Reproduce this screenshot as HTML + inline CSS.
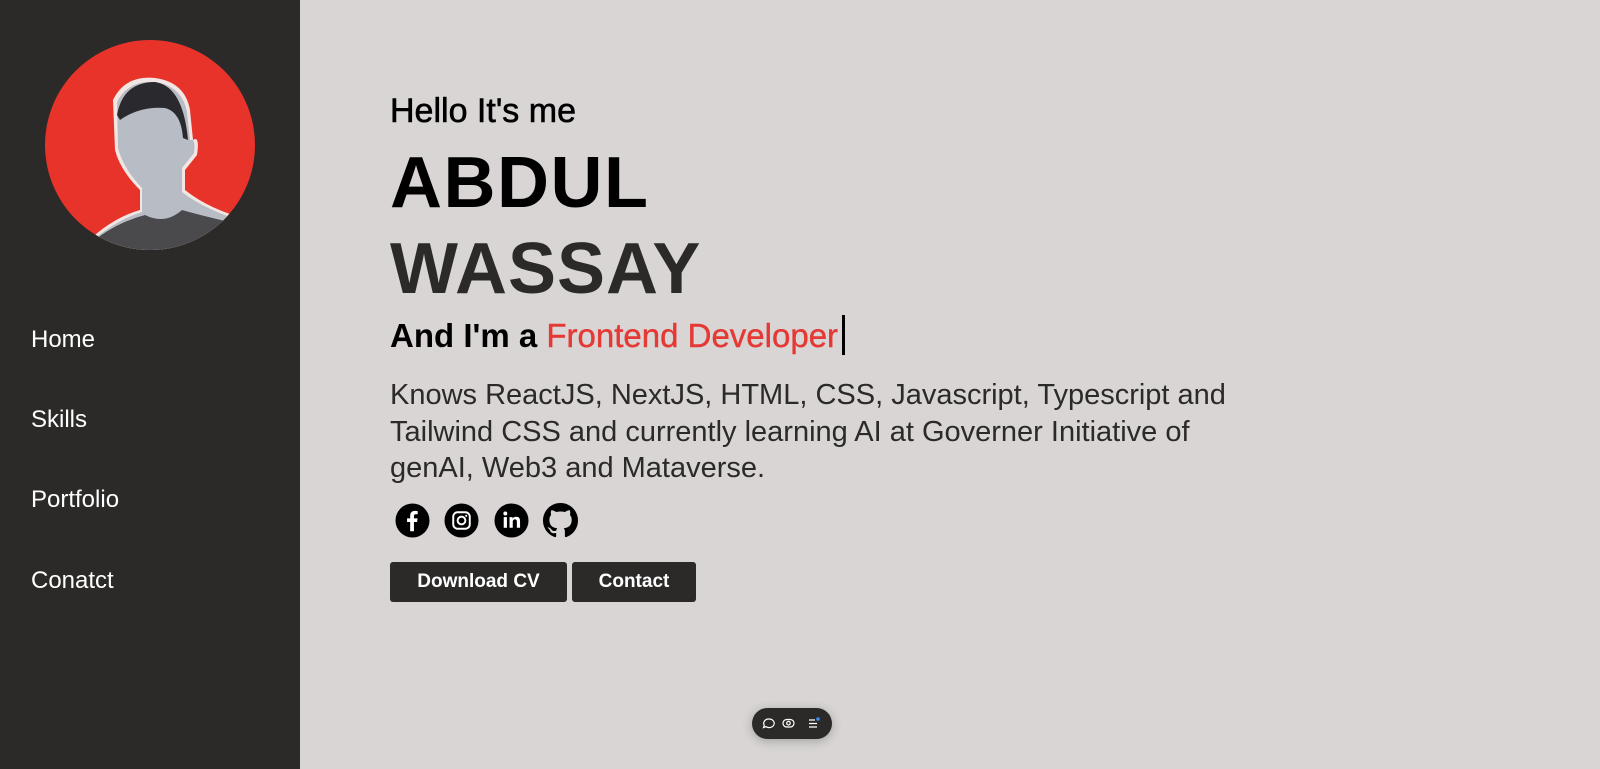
<!DOCTYPE html>
<html><head><meta charset="utf-8"><style>
*{margin:0;padding:0;box-sizing:border-box}
body{width:1600px;height:769px;overflow:hidden;background:#d8d5d4;font-family:"Liberation Sans",sans-serif;position:relative}
.side{position:absolute;left:0;top:0;width:300px;height:769px;background:#2b2a29}
.av{position:absolute;left:45px;top:40px;width:210px;height:210px;border-radius:50%;background:#e8332b;overflow:hidden}
.nav{position:absolute;left:31px;color:#fff;font-size:24px}
.t{position:absolute;left:390px;color:#000;white-space:nowrap}
.btn{position:absolute;top:562px;height:40px;background:#2b2a29;color:#fff;border-radius:3px;font-size:19px;font-weight:bold;display:flex;align-items:center;justify-content:center}
.ic{position:absolute;top:503px;width:35px;height:35px}
</style></head><body>
<div class="side">
<div class="av">
<svg width="210" height="210" viewBox="0 0 210 210">
<path d="M30 215 Q60 180 95 170 L95 150 Q75 130 70 110 L68 60 Q80 35 110 38 Q140 42 145 70 L148 100 Q155 95 152 115 L140 130 L140 150 Q165 170 205 180 L210 215Z" fill="#f2e6e4"/>
<path d="M33 215 Q62 183 97 172 L97 148 Q78 128 73 108 L72 62 Q83 40 110 42 Q137 46 142 72 L145 100 Q151 98 149 113 L137 128 L137 152 Q160 170 203 183 L210 215Z" fill="#b8bcc4"/>
<path d="M72 75 Q78 42 110 42 Q138 46 143 100 L138 98 Q136 72 120 68 Q95 66 75 80Z" fill="#2a2a2e"/>
<path d="M33 215 Q62 185 100 175 Q120 185 137 170 Q165 178 203 186 L210 215Z" fill="#4a4a4c"/>
</svg>
</div>
<div class="nav" style="top:326px">Home</div>
<div class="nav" style="top:406px">Skills</div>
<div class="nav" style="top:486px">Portfolio</div>
<div class="nav" style="top:567px">Conatct</div>
</div>
<div class="t" style="top:92px;font-size:34px;-webkit-text-stroke:0.6px #000">Hello It's me</div>
<div class="t" style="top:142px;font-size:72px;font-weight:bold;letter-spacing:1.5px">ABDUL</div>
<div class="t" style="top:228px;font-size:72px;font-weight:bold;letter-spacing:1px;color:#2b2a29">WASSAY</div>
<div class="t" style="top:315px;font-size:33px;font-weight:bold">And I'm a <span style="color:#e53935;font-weight:normal;-webkit-text-stroke:0.4px #e53935">Frontend Developer</span><span style="display:inline-block;width:3px;height:40px;background:#000;vertical-align:-8px;margin-left:4px"></span></div>
<div class="t" style="top:377px;font-size:29px;line-height:36.5px;color:#2b2a29">Knows ReactJS, NextJS, HTML, CSS, Javascript, Typescript and<br>Tailwind CSS and currently learning AI at Governer Initiative of<br>genAI, Web3 and Mataverse.</div>
<svg class="ic" style="left:395px" viewBox="0 0 36 36"><circle cx="18" cy="18" r="17.5"/><path d="M19.5 29V19.5h3.2l.5-3.7h-3.7v-2.4c0-1.1.3-1.8 1.8-1.8h2V8.3c-.4 0-1.5-.2-2.9-.2-2.9 0-4.8 1.7-4.8 5v2.7h-3.2v3.7h3.2V29z" fill="#fff"/></svg>
<svg class="ic" style="left:444px" viewBox="0 0 36 36"><circle cx="18" cy="18" r="17.5"/><rect x="9.5" y="9.5" width="17" height="17" rx="4.5" fill="none" stroke="#fff" stroke-width="2"/><circle cx="18" cy="18" r="4" fill="none" stroke="#fff" stroke-width="2"/><circle cx="22.8" cy="13.2" r="1.1" fill="#fff"/></svg>
<svg class="ic" style="left:494px" viewBox="0 0 36 36"><circle cx="18" cy="18" r="17.5"/><rect x="10" y="14.5" width="3.3" height="11" fill="#fff"/><circle cx="11.65" cy="10.8" r="2" fill="#fff"/><path d="M16 14.5h3.1v1.6c.6-1 1.9-1.9 3.7-1.9 3.4 0 4 2.1 4 5v6.3h-3.300v-5.6c0-1.4 0-3-1.9-3s-2.3 1.4-2.3 2.9v5.7H16z" fill="#fff"/></svg>
<svg class="ic" style="left:543px" viewBox="0 0 16 16"><path d="M8 0C3.58 0 0 3.580 0 8c0 3.54 2.290 6.530 5.470 7.590.4.07.55-.17.55-.38 0-.19-.01-.82-.01-1.490-2.010.37-2.530-.49-2.690-.94-.09-.23-.48-.94-.82-1.130-.28-.15-.68-.52-.01-.53.63-.01 1.080.58 1.230.82.72 1.210 1.870.87 2.330.66.07-.52.28-.87.51-1.070-1.780-.2-3.640-.89-3.640-3.950 0-.87.31-1.590.82-2.150-.08-.2-.36-1.020.08-2.120 0 0 .67-.21 2.200.82.64-.18 1.320-.27 2-.27.68 0 1.360.09 2 .27 1.530-1.040 2.200-.82 2.200-.82.44 1.100.16 1.920.08 2.120.51.56.82 1.270.82 2.150 0 3.070-1.870 3.750-3.650 3.950.29.25.54.73.54 1.480 0 1.070-.01 1.930-.01 2.200 0 .21.15.46.55.38A8.013 8.013 0 0016 8c0-4.420-3.580-8-8-8z"/></svg>
<div class="btn" style="left:390px;width:177px">Download CV</div>
<div class="btn" style="left:572px;width:124px">Contact</div>
<div style="position:absolute;left:752px;top:708px;width:80px;height:31px;border-radius:16px;background:#2b2a29;box-shadow:0 2px 10px rgba(0,0,0,.25)">
<svg width="80" height="31" viewBox="0 0 80 31" fill="none" stroke="#fff" stroke-width="1.2"><path d="M17 11a5 4.3 0 1 1-3 7.6l-2.5 1 .8-2.3A5 4.3 0 0 1 17 11z"/><rect x="31" y="11.5" width="11" height="7.5" rx="3.7"/><circle cx="36.5" cy="15.2" r="1.8"/><path d="M57 12h6M57 15.5h8M57 19h8"/><circle cx="66" cy="11" r="1.8" fill="#3b8bf0" stroke="none"/></svg>
</div>
</body></html>
